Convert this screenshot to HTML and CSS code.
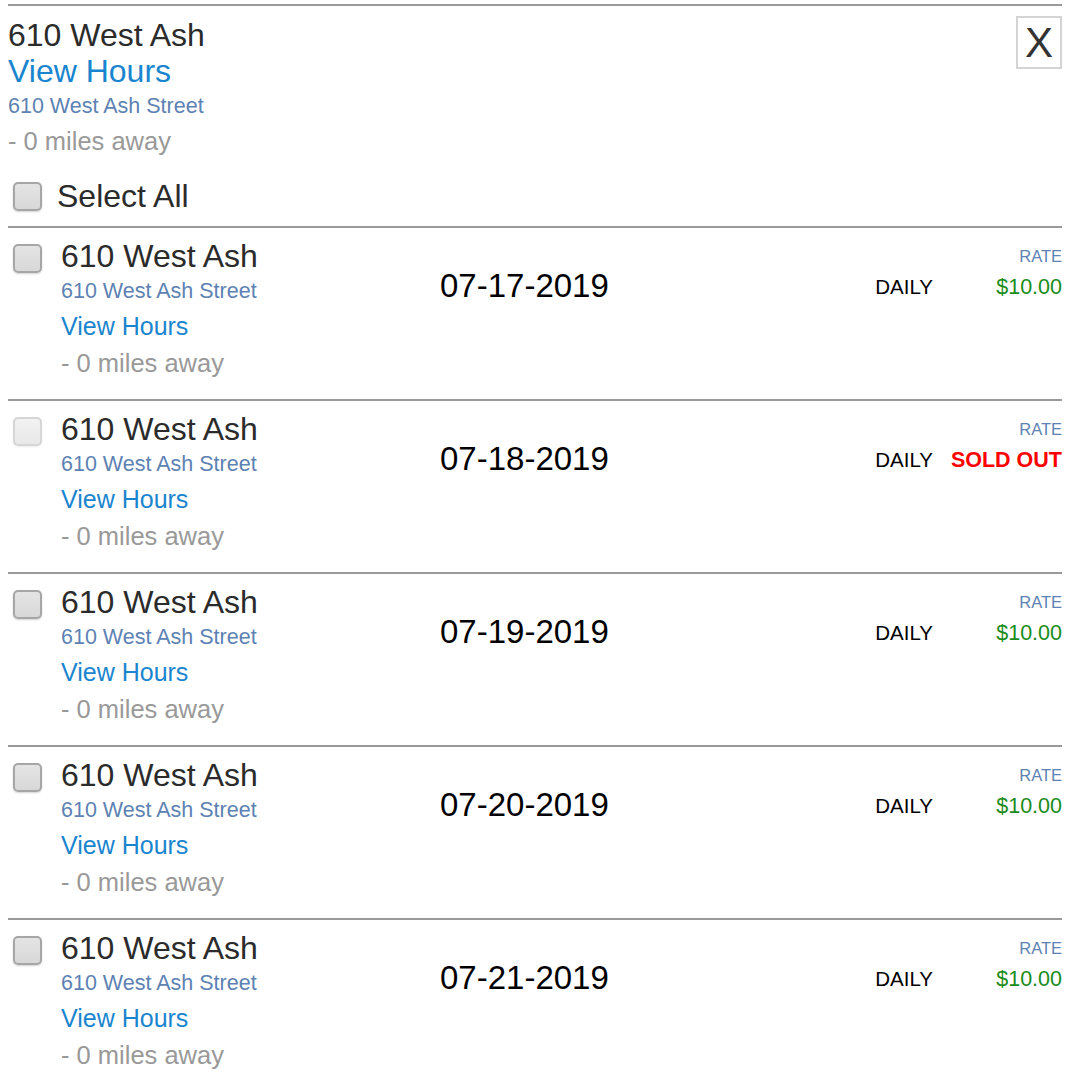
FILE: index.html
```html
<!DOCTYPE html>
<html>
<head>
<meta charset="utf-8">
<link rel="stylesheet" href="styles.css">
</head>
<body>
<div class="panel">
  <div class="header">
    <div class="header-info">
      <div class="h-name">610 West Ash</div>
      <a class="h-hours">View Hours</a>
      <div class="h-street">610 West Ash Street</div>
      <div class="h-miles">- 0 miles away</div>
    </div>
    <div class="close">X</div>
  </div>
  <div class="select-all">
    <span class="cb"></span>
    <span class="select-label">Select All</span>
  </div>

  <div class="row">
    <div class="cb-cell"><span class="cb"></span></div>
    <div class="info">
      <div class="name">610 West Ash</div>
      <div class="street">610 West Ash Street</div>
      <a class="hours">View Hours</a>
      <div class="miles">- 0 miles away</div>
    </div>
    <div class="date">07-17-2019</div>
    <div class="type">DAILY</div>
    <div class="rate"><div class="rate-label">RATE</div><div class="price">$10.00</div></div>
  </div>

  <div class="row">
    <div class="cb-cell"><span class="cb cb-disabled"></span></div>
    <div class="info">
      <div class="name">610 West Ash</div>
      <div class="street">610 West Ash Street</div>
      <a class="hours">View Hours</a>
      <div class="miles">- 0 miles away</div>
    </div>
    <div class="date">07-18-2019</div>
    <div class="type">DAILY</div>
    <div class="rate"><div class="rate-label">RATE</div><div class="price sold">SOLD OUT</div></div>
  </div>

  <div class="row">
    <div class="cb-cell"><span class="cb"></span></div>
    <div class="info">
      <div class="name">610 West Ash</div>
      <div class="street">610 West Ash Street</div>
      <a class="hours">View Hours</a>
      <div class="miles">- 0 miles away</div>
    </div>
    <div class="date">07-19-2019</div>
    <div class="type">DAILY</div>
    <div class="rate"><div class="rate-label">RATE</div><div class="price">$10.00</div></div>
  </div>

  <div class="row">
    <div class="cb-cell"><span class="cb"></span></div>
    <div class="info">
      <div class="name">610 West Ash</div>
      <div class="street">610 West Ash Street</div>
      <a class="hours">View Hours</a>
      <div class="miles">- 0 miles away</div>
    </div>
    <div class="date">07-20-2019</div>
    <div class="type">DAILY</div>
    <div class="rate"><div class="rate-label">RATE</div><div class="price">$10.00</div></div>
  </div>

  <div class="row">
    <div class="cb-cell"><span class="cb"></span></div>
    <div class="info">
      <div class="name">610 West Ash</div>
      <div class="street">610 West Ash Street</div>
      <a class="hours">View Hours</a>
      <div class="miles">- 0 miles away</div>
    </div>
    <div class="date">07-21-2019</div>
    <div class="type">DAILY</div>
    <div class="rate"><div class="rate-label">RATE</div><div class="price">$10.00</div></div>
  </div>
</div>
</body>
</html>
```

FILE: styles.css
```css
html, body {
  margin: 0;
  padding: 0;
  background: #ffffff;
}

body {
  font-family: "Liberation Sans", Arial, Helvetica, sans-serif;
  color: #333333;
}

.panel {
  width: 1054px;
  margin: 4px 0 0 8px;
  border-top: 2px solid #999999;
}

.header {
  display: flex;
  justify-content: space-between;
  align-items: flex-start;
  padding-top: 11px;
}

.header-info {
  display: flex;
  flex-direction: column;
}

.h-name {
  font-size: 32px;
  line-height: 36px;
  color: #2b2b2b;
}

.h-hours {
  font-size: 32px;
  line-height: 36px;
  color: #1a85cf;
}

.h-street {
  font-size: 21.5px;
  line-height: 34px;
  color: #5d82b3;
}

.h-miles {
  font-size: 25.5px;
  line-height: 37px;
  color: #999999;
}

.close {
  width: 42px;
  height: 49px;
  margin-top: -1px;
  border: 2px solid #d4d4d4;
  font-size: 42px;
  line-height: 50px;
  text-align: center;
  color: #333333;
}

.select-all {
  display: flex;
  align-items: center;
  margin-top: 18px;
  padding-bottom: 12px;
  border-bottom: 2px solid #999999;
}

.select-all .cb {
  margin-left: 5px;
}

.select-label {
  margin-left: 15px;
  font-size: 32px;
  line-height: 36px;
  color: #2b2b2b;
}

.cb {
  display: block;
  box-sizing: border-box;
  width: 29px;
  height: 29px;
  border: 2px solid #a6a6a6;
  border-radius: 5px;
  background: linear-gradient(#e4e4e4, #d8d8d8);
  box-shadow: 0 1px 2px rgba(0, 0, 0, 0.18);
}

.cb-disabled {
  border-color: #d6d6d6;
  background: linear-gradient(#f2f2f2, #e8e8e8);
  box-shadow: 0 1px 2px rgba(0, 0, 0, 0.08);
}

.row {
  display: grid;
  grid-template-columns: 53px 379px 1fr auto 129px;
  align-items: start;
  padding-top: 10px;
  padding-bottom: 18px;
  border-bottom: 2px solid #999999;
}

.row:last-child {
  border-bottom: none;
}

.cb-cell {
  padding-left: 5px;
  padding-top: 6px;
}

.info {
  display: flex;
  flex-direction: column;
  align-items: flex-start;
}

.name {
  font-size: 32px;
  line-height: 36px;
  color: #2b2b2b;
}

.street {
  font-size: 21.5px;
  line-height: 34px;
  color: #5d82b3;
}

.hours {
  font-size: 25px;
  line-height: 37px;
  color: #1a85cf;
}

.miles {
  font-size: 25.5px;
  line-height: 36px;
  color: #999999;
}

.date {
  margin-top: 30px;
  font-size: 33px;
  line-height: 36px;
  color: #000000;
}

.type {
  margin-top: 37px;
  font-size: 20.5px;
  line-height: 24px;
  color: #000000;
}

.rate {
  text-align: right;
  padding-top: 8px;
}

.rate-label {
  font-size: 16.5px;
  line-height: 20px;
  color: #5d82b3;
}

.price {
  margin-top: 9px;
  font-size: 21.5px;
  line-height: 24px;
  color: #1a8c1a;
}

.price.sold {
  color: #ff0000;
  font-weight: bold;
}
```
